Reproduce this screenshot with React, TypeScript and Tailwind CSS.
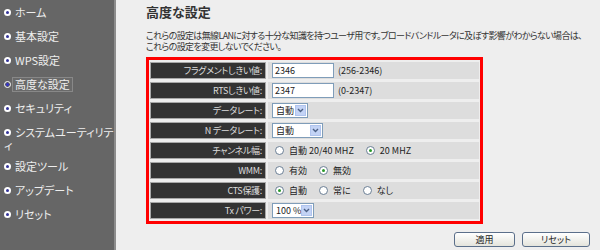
import React from "react";

const jp = "font-['Noto_Sans_CJK_JP','Liberation_Sans',sans-serif] [font-feature-settings:'palt']";

function Bullet({ selected }: { selected?: boolean }) {
  return selected ? (
    <span className="flex h-[7px] w-[7px] shrink-0 items-center justify-center rounded-full border border-white bg-[#556]">
      <span className="h-[3px] w-[3px] rounded-full bg-[#33c]" />
    </span>
  ) : (
    <span className="flex h-[7px] w-[7px] shrink-0 items-center justify-center rounded-full bg-white">
      <span className="h-[3px] w-[3px] rounded-full bg-[#339]" />
    </span>
  );
}

function NavItem({ label, selected, mb = "mb-[11px]", lines }: { label?: string; selected?: boolean; mb?: string; lines?: string[] }) {
  return (
    <div className={`flex items-start gap-[4px] pl-[4px] ${mb}`}>
      <span className="mt-[3px] flex leading-none"><Bullet selected={selected} /></span>
      {lines ? (
        <div className="text-[11px] leading-[13px] text-[#eee] whitespace-nowrap">
          {lines.map((l, i) => (
            <div key={i} className={i > 0 ? "-ml-[11px]" : ""}>{l}</div>
          ))}
        </div>
      ) : (
        <span
          className={`text-[11px] leading-[13px] text-[#eee] whitespace-nowrap ${
            selected ? "border border-[#888] bg-[#6a6a6a] px-[2px] -ml-[3px] -my-px" : ""
          }`}
        >
          {label}
        </span>
      )}
    </div>
  );
}

function Radio({ checked }: { checked?: boolean }) {
  return (
    <span className="flex h-[9px] w-[9px] shrink-0 items-center justify-center rounded-full border border-[#6a7e94] bg-white">
      {checked && <span className="h-[3px] w-[3px] rounded-full bg-[#2a9a2a]" />}
    </span>
  );
}

function Sel({ text, w }: { text: string; w: string }) {
  return (
    <div className={`flex h-[15px] items-center justify-between border border-[#7f9db9] bg-white pl-[3px] pr-[1px] whitespace-nowrap ${w}`}>
      <span className="text-[9px] leading-[13px] text-[#222]">{text}</span>
      <span className="flex h-[11px] w-[11px] shrink-0 items-center justify-center border border-[#b0c4ee] bg-[#c3d3f5]">
        <svg width="7" height="5" viewBox="0 0 7 5">
          <path d="M1 1 L3.5 3.5 L6 1" stroke="#4d6185" strokeWidth="1.4" fill="none" />
        </svg>
      </span>
    </div>
  );
}

function Row({ label, children }: { label: string; children?: React.ReactNode }) {
  return (
    <div className="flex h-[17px] gap-[2px]">
      <div className="flex w-[116px] items-center justify-end border border-[#a8a8a8] bg-[#333] pr-[3px] text-[9px] leading-[13px] tracking-[-0.3px] text-[#ddd] whitespace-nowrap">
        {label}
      </div>
      <div className="flex flex-1 items-center bg-[#ddd] pl-[4px] text-[9px] leading-[13px] text-[#222] whitespace-nowrap">
        {children}
      </div>
    </div>
  );
}

function RadioOpt({ checked, label, ml }: { checked?: boolean; label: string; ml: string }) {
  return (
    <span className={`flex items-center ${ml}`}>
      <Radio checked={checked} />
      <span className="ml-[5px]">{label}</span>
    </span>
  );
}

export default function App() {
  return (
    <div className={`flex h-[250px] w-[600px] overflow-hidden bg-[#eee] ${jp}`}>
      <div className="h-full w-[116px] shrink-0 border-r-[2px] border-[#8c8c8c] bg-[#666] pt-[6px]">
        <NavItem label="ホーム" />
        <NavItem label="基本設定" />
        <NavItem label="WPS設定" />
        <NavItem label="高度な設定" selected />
        <NavItem label="セキュリティ" />
        <NavItem lines={["システムユーティリテ", "ィ"]} mb="mb-[8px]" />
        <NavItem label="設定ツール" />
        <NavItem label="アップデート" />
        <NavItem label="リセット" />
      </div>
      <div className="flex-1 pl-[30px] pt-[4px]">
        <h1 className="text-[13px] leading-[16px] font-bold text-[#333]">高度な設定</h1>
        <div className="mt-[10px] text-[9px] leading-[11px] tracking-[-0.65px] text-[#333] whitespace-nowrap">
          <div>これらの設定は無線LANに対する十分な知識を持つユーザ用です。ブロードバンドルータに及ぼす影響がわからない場合は、</div>
          <div>これらの設定を変更しないでください。</div>
        </div>
        <div className="mt-[5px] flex w-[337px] flex-col gap-[3px] border-[3px] border-[#f00] px-[1px] py-[2px]">
          <Row label="フラグメントしきい値:">
            <input readOnly value="2346" className="h-[15px] w-[62px] border border-[#7f9db9] bg-white px-[2px] text-[9px] text-[#222] outline-none" />
            <span className="ml-[4px]">(256-2346)</span>
          </Row>
          <Row label="RTSしきい値:">
            <input readOnly value="2347" className="h-[15px] w-[62px] border border-[#7f9db9] bg-white px-[2px] text-[9px] text-[#222] outline-none" />
            <span className="ml-[4px]">(0-2347)</span>
          </Row>
          <Row label="データレート:">
            <Sel text="自動" w="w-[36px]" />
          </Row>
          <Row label="N データレート:">
            <Sel text="自動" w="w-[51px]" />
          </Row>
          <Row label="チャンネル幅:">
            <RadioOpt label="自動 20/40 MHZ" ml="ml-[3px]" />
            <RadioOpt label="20 MHZ" checked ml="ml-[12px]" />
          </Row>
          <Row label="WMM:">
            <RadioOpt label="有効" ml="ml-[3px]" />
            <RadioOpt label="無効" checked ml="ml-[12px]" />
          </Row>
          <Row label="CTS保護:">
            <RadioOpt label="自動" checked ml="ml-[3px]" />
            <RadioOpt label="常に" ml="ml-[12px]" />
            <RadioOpt label="なし" ml="ml-[12px]" />
          </Row>
          <Row label="Tx パワー:">
            <Sel text="100 %" w="w-[42px]" />
          </Row>
        </div>
        <div className="mt-[8px] flex justify-end gap-[7px] pr-[10px]">
          <button className="h-[15px] w-[61px] rounded-[3px] border border-[#5b6f8a] bg-gradient-to-b from-[#fff] to-[#e4e4dc] text-[9px] leading-[13px] text-[#222]">適用</button>
          <button className="h-[15px] w-[68px] rounded-[3px] border border-[#5b6f8a] bg-gradient-to-b from-[#fff] to-[#e4e4dc] text-[9px] leading-[13px] text-[#222]">リセット</button>
        </div>
      </div>
    </div>
  );
}
